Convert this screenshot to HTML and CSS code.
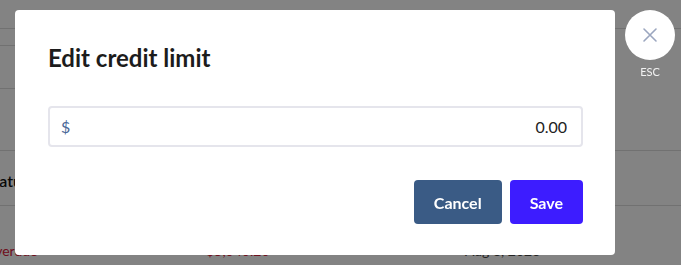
FILE: index.html
```html
<!DOCTYPE html>
<html lang="en">
<head>
  <meta charset="UTF-8">
  <title>Edit credit limit</title>
  <meta name="viewport" content="width=device-width, initial-scale=1.0">
  <link rel="stylesheet" href="styles.css">
</head>
<body>

<!-- Page behind the modal -->
<div class="page">
  <div class="topbar"></div>
  <div class="tabs"></div>
  <div class="filters"></div>
  <div class="summary"></div>
  <div class="table-head">
    <div class="col col-status">Status</div>
  </div>
  <div class="table-row">
    <div class="col col-status"><span class="badge-overdue">Overdue</span></div>
    <div class="col col-amount">-$5,040.20</div>
    <div class="col col-date">Aug 8, 2023</div>
  </div>
</div>

<!-- Modal -->
<div class="overlay">
  <div class="modal">
    <h2 class="modal-title">Edit credit limit</h2>
    <div class="money-input">
      <span class="currency">$</span>
      <input type="text" value="0.00">
    </div>
    <div class="modal-actions">
      <button class="btn btn-cancel">Cancel</button>
      <button class="btn btn-save">Save</button>
    </div>
  </div>

  <div class="close-wrap">
    <button class="close-btn" aria-label="Close">
      <svg width="16" height="16" viewBox="0 0 16 16">
        <path d="M2 2 L14 14 M14 2 L2 14" stroke="#9ba6bf" stroke-width="1.6" stroke-linecap="round" fill="none"/>
      </svg>
    </button>
    <div class="esc">ESC</div>
  </div>
</div>

</body>
</html>
```

FILE: styles.css
```css
body {
  margin: 0;
  font-family: Lato, "Open Sans", Arial, sans-serif;
  background: #ffffff;
  color: #111;
  overflow: hidden;
}

/* background page */
.page {
  width: 681px;
  height: 265px;
  overflow: hidden;
}

.topbar {
  height: 28px;
  border-bottom: 1px solid #dcdcdc;
}

.tabs {
  width: 200px;
  height: 16px;
  border-bottom: 1px solid #dcdcdc;
}

.filters {
  width: 200px;
  height: 42px;
  border-bottom: 1px solid #dcdcdc;
}

.summary {
  height: 61px;
  border-bottom: 1px solid #dcdcdc;
}

.table-head {
  display: flex;
  height: 55px;
  border-bottom: 1px solid #dcdcdc;
  padding-top: 18px;
  box-sizing: border-box;
  font-size: 16px;
  line-height: 24px;
  font-weight: 600;
  color: #111;
}

.table-row {
  display: flex;
  padding-top: 35px;
  font-size: 14px;
  line-height: 20px;
}

.col-status {
  width: 200px;
  margin-left: -15px;
  flex-shrink: 0;
}

.badge-overdue {
  color: #d8203a;
  margin-left: -1px;
}

.col-amount {
  width: 257px;
  padding-left: 16px;
  color: #d8203a;
}

.col-date {
  padding-left: 7px;
  color: #444;
}

/* modal */
.overlay {
  position: fixed;
  inset: 0;
  background: rgba(0, 0, 0, 0.486);
  display: flex;
  align-items: flex-start;
  gap: 10px;
  padding: 10px 15px;
}

.modal {
  width: 600px;
  flex-shrink: 0;
  box-sizing: border-box;
  background: #ffffff;
  border-radius: 4px;
  padding: 32px 32px 31px 33px;
}

.modal-title {
  margin: 2px 0 0 0;
  font-size: 24px;
  line-height: 28px;
  font-weight: 700;
  color: #1c1c1c;
}

.money-input {
  margin-top: 34px;
  height: 41px;
  box-sizing: border-box;
  border: 2px solid #e5e5ec;
  border-radius: 4px;
  display: flex;
  align-items: center;
  padding: 0 14px 0 11px;
}

.currency {
  color: #4a6898;
  font-size: 16px;
}

.money-input input {
  flex: 1;
  border: none;
  outline: none;
  text-align: right;
  font-family: inherit;
  font-size: 16px;
  color: #222;
  padding: 0;
  background: transparent;
}

.modal-actions {
  margin-top: 33px;
  display: flex;
  justify-content: flex-end;
  gap: 8px;
}

.btn {
  height: 44px;
  padding: 0 20px;
  border: none;
  border-radius: 4px;
  color: #ffffff;
  font-family: inherit;
  font-size: 16px;
  font-weight: 700;
  cursor: pointer;
}

.btn-cancel {
  background: #3a5b85;
}

.btn-save {
  background: #3d1cff;
}

/* close */
.close-wrap {
  display: flex;
  flex-direction: column;
  align-items: center;
  flex-shrink: 0;
}

.close-btn {
  width: 50px;
  height: 50px;
  border-radius: 50%;
  border: none;
  background: #ffffff;
  display: flex;
  align-items: center;
  justify-content: center;
  padding: 0;
  cursor: pointer;
}

.esc {
  margin-top: 5px;
  font-size: 11px;
  color: #f2f2f2;
}
```
